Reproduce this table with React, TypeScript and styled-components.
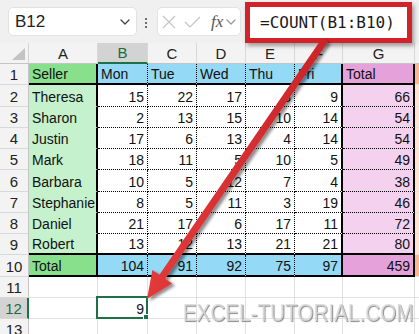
import React from 'react';
import styled, { createGlobalStyle } from 'styled-components';

const Global = createGlobalStyle`
  html, body { margin: 0; padding: 0; background: #fff; }
  body { font-family: "Liberation Sans", Arial, sans-serif; }
`;

type Line = 'none' | 'grid' | 'dot' | 'thick';

const line = (l: Line) => {
  switch (l) {
    case 'grid': return '1px solid #e1e1e1';
    case 'dot': return '1px dotted #000';
    case 'thick': return '2px solid #000';
    default: return '1px solid transparent';
  }
};

const Page = styled.div`
  position: relative;
  width: 419px;
  height: 334px;
  overflow: hidden;
  background: #fff;
`;

const Toolbar = styled.div`
  height: 43px;
  box-sizing: border-box;
  background: #f0f0f0;
  display: flex;
  align-items: flex-start;
  padding-left: 8px;
`;

const NameBox = styled.div`
  margin-top: 7px;
  width: 129px;
  height: 29px;
  box-sizing: border-box;
  background: #fff;
  border: 1px solid #e2e2e2;
  border-radius: 5px;
  display: flex;
  align-items: center;
  justify-content: space-between;
  padding: 0 6px 0 6px;
  font-size: 17px;
  color: #222;
`;

const Dots = styled.div`
  margin: 18px 0 0 8px;
  width: 3px;
  display: flex;
  flex-direction: column;
  gap: 2px;
  span {
    width: 2px;
    height: 2px;
    background: #444;
    border-radius: 1px;
  }
`;

const FxBox = styled.div`
  margin: 7px 0 0 9px;
  width: 84px;
  height: 29px;
  box-sizing: border-box;
  background: #fff;
  border: 1px solid #e2e2e2;
  border-radius: 5px;
  display: flex;
  align-items: center;
  padding-left: 4px;
  gap: 8px;
`;

const FxLabel = styled.span`
  font-family: "Liberation Serif", "DejaVu Serif", serif;
  font-style: italic;
  font-size: 17px;
  color: #555;
  margin-left: 2px;
  margin-right: -5px;
`;

const FormulaFrame = styled.div`
  margin: 2px 0 0 4px;
  width: 167px;
  height: 41px;
  box-sizing: border-box;
  border: 5px solid #d4222a;
  background: #fff;
  box-shadow: 2px 3px 4px rgba(0, 0, 0, 0.35);
  display: flex;
  align-items: center;
  padding-left: 10px;
  font-family: "DejaVu Sans Mono", "Liberation Mono", monospace;
  font-size: 16px;
  color: #1a1a1a;
  position: relative;
  z-index: 2;
`;

const Sheet = styled.div`
  display: grid;
  grid-template-columns: 29px 69px 50px 49px 49px 49px 48px 72px 60px;
  grid-template-rows: 21px 21px 22px 21px 21px 21px 22px 21px 21px 21px 22px 21px 21px 21px;
`;

const Corner = styled.div`
  background: #f3f3f3;
  border-right: 1px solid #d4d4d4;
  border-bottom: 1px solid #c4c4c4;
  box-sizing: border-box;
  display: flex;
  align-items: flex-end;
  justify-content: flex-end;
  padding: 0 3px 3px 0;
`;

const ColHead = styled.div<{ $sel?: boolean }>`
  box-sizing: border-box;
  background: ${p => (p.$sel ? '#d3d3d3' : '#f3f3f3')};
  border-right: 1px solid #d8d8d8;
  border-bottom: ${p => (p.$sel ? '2px solid #1e7145' : '1px solid #c4c4c4')};
  color: ${p => (p.$sel ? '#1e6b41' : '#222')};
  display: flex;
  align-items: center;
  justify-content: center;
  font-size: 15px;
`;

const RowHead = styled.div<{ $sel?: boolean }>`
  box-sizing: border-box;
  background: ${p => (p.$sel ? '#d3d3d3' : '#f3f3f3')};
  border-right: ${p => (p.$sel ? '2px solid #1e7145' : '1px solid #c4c4c4')};
  border-bottom: 1px solid #d8d8d8;
  color: ${p => (p.$sel ? '#1e6b41' : '#222')};
  display: flex;
  align-items: center;
  justify-content: center;
  font-size: 15px;
  padding-top: 1px;
`;

const Cell = styled.div<{ $bg?: string; $r: Line; $b: Line; $num?: boolean }>`
  position: relative;
  box-sizing: border-box;
  background: ${p => p.$bg ?? '#fff'};
  border-right: ${p => line(p.$r)};
  border-bottom: ${p => line(p.$b)};
  display: flex;
  align-items: flex-end;
  justify-content: ${p => (p.$num ? 'flex-end' : 'flex-start')};
  padding: 0 3px 0 3px;
  font-size: 14px;
  line-height: 17px;
  color: #111;
  white-space: nowrap;
`;

const Selection = styled.div`
  position: absolute;
  left: -2px;
  top: -2px;
  right: -1px;
  bottom: -1px;
  border: 2px solid #1e7145;
  pointer-events: none;
  &::after {
    content: '';
    position: absolute;
    right: -4px;
    bottom: -4px;
    width: 5px;
    height: 5px;
    background: #1e7145;
    border: 1px solid #fff;
  }
`;

const Arrow = styled.svg`
  position: absolute;
  left: 0;
  top: 0;
  width: 419px;
  height: 334px;
  pointer-events: none;
  z-index: 3;
`;

const Watermark = styled.div`
  position: absolute;
  right: 6px;
  top: 300px;
  font-family: "Liberation Sans", Arial, sans-serif;
  font-size: 23px;
  letter-spacing: 0;
  color: rgba(218, 218, 218, 0.85);
  text-shadow: 1px 1px 1px rgba(90, 90, 90, 0.7);
  transform: scaleX(0.9);
  transform-origin: right center;
  white-space: nowrap;
  pointer-events: none;
  z-index: 1;
`;

const COLORS = {
  greenHead: '#88e08d',
  greenBody: '#c6f1cd',
  blue: '#94d9f5',
  pinkHead: '#e4a1da',
  pinkBody: '#f3d1ef',
  orangeHead: '#f6b895',
  orangeBody: '#fde4d5',
};

const header = ['Seller', 'Mon', 'Tue', 'Wed', 'Thu', 'Fri', 'Total'];
const rows: [string, number, number, number, number, number, number][] = [
  ['Theresa', 15, 22, 17, 3, 9, 66],
  ['Sharon', 2, 13, 15, 10, 14, 54],
  ['Justin', 17, 6, 13, 4, 14, 54],
  ['Mark', 18, 11, 5, 10, 5, 49],
  ['Barbara', 10, 5, 12, 7, 4, 38],
  ['Stephanie', 8, 5, 11, 3, 19, 46],
  ['Daniel', 21, 17, 6, 17, 11, 72],
  ['Robert', 13, 12, 13, 21, 21, 80],
];
const totals: (string | number)[] = ['Total', 104, 91, 92, 75, 97, 459];
const cols = ['A', 'B', 'C', 'D', 'E', 'F', 'G', 'H'];

const rightLine = (c: number): Line => (c === 0 || c === 5 || c === 6 ? 'thick' : 'dot');

function bgFor(r: number, c: number) {
  const head = r === 1 || r === 10;
  if (c === 0) return head ? COLORS.greenHead : COLORS.greenBody;
  if (c === 6) return head ? COLORS.pinkHead : COLORS.pinkBody;
  return head ? COLORS.blue : '#fff';
}

function bottomLine(r: number, c: number): Line {
  if (r === 1 || r === 9 || r === 10) return 'thick';
  return c === 0 ? 'none' : 'dot';
}

function TableRow({ r, values }: { r: number; values: (string | number)[] }) {
  return (
    <>
      <RowHead>{r}</RowHead>
      {values.map((v, c) => (
        <Cell key={c} $bg={bgFor(r, c)} $r={rightLine(c)} $b={bottomLine(r, c)} $num={typeof v === 'number'}>
          {v}
        </Cell>
      ))}
      <Cell $bg={r === 1 || r === 10 ? COLORS.orangeHead : COLORS.orangeBody} $r="grid" $b="grid" />
    </>
  );
}

function EmptyRow({ r, sel }: { r: number; sel?: boolean }) {
  return (
    <>
      <RowHead $sel={sel}>{r}</RowHead>
      {cols.map((c, i) => (
        <Cell key={c} $r="grid" $b="grid" $num>
          {sel && i === 1 ? (
            <>
              9
              <Selection />
            </>
          ) : null}
        </Cell>
      ))}
    </>
  );
}

const ChevronDown = ({ color = '#555', size = 10 }: { color?: string; size?: number }) => (
  <svg width={size} height={size * 0.6} viewBox="0 0 10 6" fill="none">
    <path d="M1 1 L5 5 L9 1" stroke={color} strokeWidth="1.3" strokeLinecap="round" strokeLinejoin="round" />
  </svg>
);

export default function App() {
  // arrow geometry
  const S = { x: 325, y: 40 };
  const T = { x: 147, y: 299 };
  const dx = T.x - S.x;
  const dy = T.y - S.y;
  const len = Math.hypot(dx, dy);
  const u = { x: dx / len, y: dy / len };
  const n = { x: -u.y, y: u.x };
  const L = 27;
  const W = 12;
  const w = 3.5;
  const B = { x: T.x - L * u.x, y: T.y - L * u.y };
  const pts = [
    [S.x + w * n.x, S.y + w * n.y],
    [B.x + w * n.x, B.y + w * n.y],
    [B.x + W * n.x, B.y + W * n.y],
    [T.x, T.y],
    [B.x - W * n.x, B.y - W * n.y],
    [B.x - w * n.x, B.y - w * n.y],
    [S.x - w * n.x, S.y - w * n.y],
  ]
    .map(p => p.map(v => v.toFixed(1)).join(','))
    .join(' ');

  return (
    <Page>
      <Global />
      <Toolbar>
        <NameBox>
          <span>B12</span>
          <ChevronDown size={10} color="#444" />
        </NameBox>
        <Dots>
          <span />
          <span />
          <span />
        </Dots>
        <FxBox>
          <svg width="14" height="14" viewBox="0 0 14 14">
            <path d="M1 1 L13 13 M13 1 L1 13" stroke="#c4c4c4" strokeWidth="1.2" />
          </svg>
          <svg width="17" height="12" viewBox="0 0 17 12">
            <path d="M1 6 L6 11 L16 1" stroke="#c4c4c4" strokeWidth="1.2" fill="none" />
          </svg>
          <FxLabel>fx</FxLabel>
          <ChevronDown size={10} color="#999" />
        </FxBox>
        <FormulaFrame>=COUNT(B1:B10)</FormulaFrame>
      </Toolbar>
      <Sheet>
        <Corner>
          <svg width="13" height="12" viewBox="0 0 13 12">
            <polygon points="13,0 13,12 0,12" fill="#c3c3c3" />
          </svg>
        </Corner>
        {cols.map(c => (
          <ColHead key={c} $sel={c === 'B'}>
            {c === 'H' ? null : c}
          </ColHead>
        ))}
        <TableRow r={1} values={header} />
        {rows.map((row, i) => (
          <TableRow key={i} r={i + 2} values={row} />
        ))}
        <TableRow r={10} values={totals} />
        <EmptyRow r={11} />
        <EmptyRow r={12} sel />
        <EmptyRow r={13} />
      </Sheet>
      <Watermark>EXCEL-TUTORIAL.COM</Watermark>
      <Arrow viewBox="0 0 419 334">
        <defs>
          <filter id="arrowShadow" x="-20%" y="-20%" width="140%" height="140%">
            <feDropShadow dx="3" dy="2" stdDeviation="1.8" floodColor="#000" floodOpacity="0.45" />
          </filter>
          <linearGradient id="arrowFill" x1="0" y1="0" x2="1" y2="0">
            <stop offset="0" stopColor="#e23a3a" />
            <stop offset="1" stopColor="#c9252a" />
          </linearGradient>
        </defs>
        <polygon points={pts} fill="url(#arrowFill)" filter="url(#arrowShadow)" />
      </Arrow>
    </Page>
  );
}
